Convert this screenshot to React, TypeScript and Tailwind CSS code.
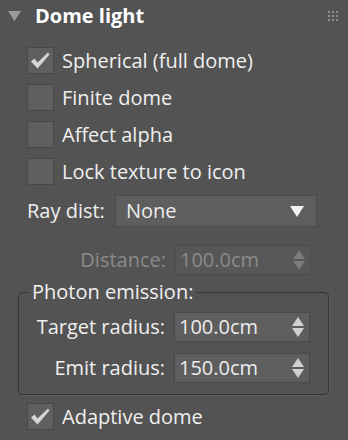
import React from "react";

const font = { fontFamily: '"Open Sans", "Noto Sans", sans-serif' };

function Check({ checked, label }: { checked?: boolean; label: string }) {
  return (
    <div className="flex h-[27px] items-center">
      <div className="flex h-[27px] w-[27px] shrink-0 items-center justify-center border border-[#484848] bg-[#5f5f5f]">
        {checked && (
          <svg width="25" height="25" viewBox="0 0 25 25">
            <path d="M3 13.5 L6.5 10.5 L9.5 14.5 L20 4.5 L21.5 6.5 L9.5 20.5 Z" fill="#d6d6d6" />
          </svg>
        )}
      </div>
      <span className="ml-[8px] text-[20px] leading-none text-[#f0f0f0]">{label}</span>
    </div>
  );
}

function Spinner({ value, disabled }: { value: string; disabled?: boolean }) {
  const c = disabled ? "#7c7c7c" : "#d0d0d0";
  return (
    <div
      className={
        "flex h-[30px] w-[136px] items-center justify-between border pl-[4px] pr-[4px] " +
        (disabled ? "border-[#4c4c4c] bg-[#575757] text-[#8a8a8a]" : "border-[#4a4a4a] bg-[#5e5e5e] text-[#ececec]")
      }
    >
      <span className="text-[20px] leading-none">{value}</span>
      <svg width="14" height="22" viewBox="0 0 14 22">
        <path d="M7 1 L13 10 L1 10 Z" fill={c} />
        <path d="M1 12 L13 12 L7 21 Z" fill={c} />
      </svg>
    </div>
  );
}

export default function App() {
  return (
    <div className="h-[440px] w-[348px] overflow-hidden bg-[#535353]" style={font}>
      <div className="flex h-[32px] items-center">
        <svg className="ml-[8px]" width="13" height="10" viewBox="0 0 13 10">
          <path d="M0 0 L13 0 L6.5 10 Z" fill="#9c9c9c" />
        </svg>
        <span className="ml-[14px] text-[20px] font-bold leading-none text-white">Dome light</span>
        <svg className="ml-auto mr-[10px]" width="10" height="10" viewBox="0 0 10 10">
          {[0, 4, 8].map((y) =>
            [0, 4, 8].map((x) => <rect key={x + "-" + y} x={x} y={y} width="2" height="2" fill="#8e8e8e" />)
          )}
        </svg>
      </div>

      <div className="ml-[27px] mt-[15px] flex flex-col gap-[10px]">
        <Check checked label="Spherical (full dome)" />
        <Check label="Finite dome" />
        <Check label="Affect alpha" />
        <Check label="Lock texture to icon" />
      </div>

      <div className="ml-[27px] mt-[10px] flex items-center">
        <span className="w-[88px] text-[20px] leading-none text-[#f0f0f0]">Ray dist:</span>
        <div className="flex h-[32px] w-[202px] items-center justify-between border border-[#4a4a4a] bg-[#5e5e5e] pl-[10px] pr-[12px]">
          <span className="text-[20px] leading-none text-[#ececec]">None</span>
          <svg width="14" height="11" viewBox="0 0 14 11">
            <path d="M0 0 L14 0 L7 11 Z" fill="#f0f0f0" />
          </svg>
        </div>
      </div>

      <div className="ml-[19px] mt-[18px] flex items-center gap-[9px]">
        <span className="w-[147px] text-right text-[20px] leading-none text-[#8a8a8a]">Distance:</span>
        <Spinner value="100.0cm" disabled />
      </div>

      <fieldset className="ml-[18px] mt-[7px] w-[311px] rounded-[4px] border border-[#363636] pb-[11px] pt-[10px] shadow-[1px_1px_0_#5a5a5a]">
        <legend className="ml-[10px] px-[3px] text-[20px] leading-[20px] text-[#f0f0f0]">Photon emission:</legend>
        <div className="flex flex-col gap-[11px]">
          <div className="flex items-center gap-[9px]">
            <span className="w-[146px] text-right text-[20px] leading-none text-[#f0f0f0]">Target radius:</span>
            <Spinner value="100.0cm" />
          </div>
          <div className="flex items-center gap-[9px]">
            <span className="w-[146px] text-right text-[20px] leading-none text-[#f0f0f0]">Emit radius:</span>
            <Spinner value="150.0cm" />
          </div>
        </div>
      </fieldset>

      <div className="ml-[27px] mt-[8px]">
        <Check checked label="Adaptive dome" />
      </div>
    </div>
  );
}
